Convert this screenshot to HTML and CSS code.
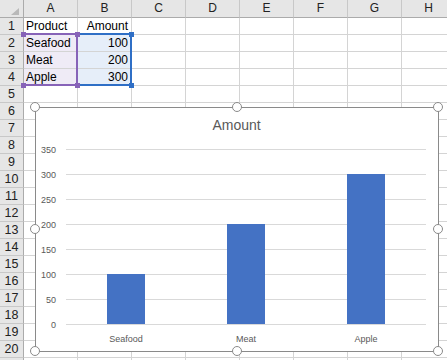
FILE: index.html
```html
<!DOCTYPE html>
<html>
<head>
<meta charset="utf-8">
<link rel="stylesheet" href="styles.css">
</head>
<body>
<div class="app">
  <div class="sheet">
    <div class="corner"><span class="tri"></span></div>
    <div class="ch">A</div><div class="ch">B</div><div class="ch">C</div><div class="ch">D</div><div class="ch">E</div><div class="ch">F</div><div class="ch">G</div><div class="ch">H</div>

    <div class="rh">1</div><div class="c">Product</div><div class="c r">Amount</div><div class="c"></div><div class="c"></div><div class="c"></div><div class="c"></div><div class="c"></div><div class="c"></div>
    <div class="rh">2</div><div class="c pf">Seafood</div><div class="c r bf">100</div><div class="c"></div><div class="c"></div><div class="c"></div><div class="c"></div><div class="c"></div><div class="c"></div>
    <div class="rh">3</div><div class="c pf">Meat</div><div class="c r bf">200</div><div class="c"></div><div class="c"></div><div class="c"></div><div class="c"></div><div class="c"></div><div class="c"></div>
    <div class="rh">4</div><div class="c pf">Apple</div><div class="c r bf">300</div><div class="c"></div><div class="c"></div><div class="c"></div><div class="c"></div><div class="c"></div><div class="c"></div>
    <div class="rh">5</div><div class="c"></div><div class="c"></div><div class="c"></div><div class="c"></div><div class="c"></div><div class="c"></div><div class="c"></div><div class="c"></div>
    <div class="rh">6</div><div class="c"></div><div class="c"></div><div class="c"></div><div class="c"></div><div class="c"></div><div class="c"></div><div class="c"></div><div class="c"></div>
    <div class="rh">7</div><div class="c"></div><div class="c"></div><div class="c"></div><div class="c"></div><div class="c"></div><div class="c"></div><div class="c"></div><div class="c"></div>
    <div class="rh">8</div><div class="c"></div><div class="c"></div><div class="c"></div><div class="c"></div><div class="c"></div><div class="c"></div><div class="c"></div><div class="c"></div>
    <div class="rh">9</div><div class="c"></div><div class="c"></div><div class="c"></div><div class="c"></div><div class="c"></div><div class="c"></div><div class="c"></div><div class="c"></div>
    <div class="rh">10</div><div class="c"></div><div class="c"></div><div class="c"></div><div class="c"></div><div class="c"></div><div class="c"></div><div class="c"></div><div class="c"></div>
    <div class="rh">11</div><div class="c"></div><div class="c"></div><div class="c"></div><div class="c"></div><div class="c"></div><div class="c"></div><div class="c"></div><div class="c"></div>
    <div class="rh">12</div><div class="c"></div><div class="c"></div><div class="c"></div><div class="c"></div><div class="c"></div><div class="c"></div><div class="c"></div><div class="c"></div>
    <div class="rh">13</div><div class="c"></div><div class="c"></div><div class="c"></div><div class="c"></div><div class="c"></div><div class="c"></div><div class="c"></div><div class="c"></div>
    <div class="rh">14</div><div class="c"></div><div class="c"></div><div class="c"></div><div class="c"></div><div class="c"></div><div class="c"></div><div class="c"></div><div class="c"></div>
    <div class="rh">15</div><div class="c"></div><div class="c"></div><div class="c"></div><div class="c"></div><div class="c"></div><div class="c"></div><div class="c"></div><div class="c"></div>
    <div class="rh">16</div><div class="c"></div><div class="c"></div><div class="c"></div><div class="c"></div><div class="c"></div><div class="c"></div><div class="c"></div><div class="c"></div>
    <div class="rh">17</div><div class="c"></div><div class="c"></div><div class="c"></div><div class="c"></div><div class="c"></div><div class="c"></div><div class="c"></div><div class="c"></div>
    <div class="rh">18</div><div class="c"></div><div class="c"></div><div class="c"></div><div class="c"></div><div class="c"></div><div class="c"></div><div class="c"></div><div class="c"></div>
    <div class="rh">19</div><div class="c"></div><div class="c"></div><div class="c"></div><div class="c"></div><div class="c"></div><div class="c"></div><div class="c"></div><div class="c"></div>
    <div class="rh">20</div><div class="c"></div><div class="c"></div><div class="c"></div><div class="c"></div><div class="c"></div><div class="c"></div><div class="c"></div><div class="c"></div>
    <div class="rh"></div><div class="c"></div><div class="c"></div><div class="c"></div><div class="c"></div><div class="c"></div><div class="c"></div><div class="c"></div><div class="c"></div>
  </div>

  <div class="sel sel-blue"></div>
  <div class="sel sel-purple"></div>
  <span class="hd hd-b hd-b1"></span>
  <span class="hd hd-b hd-b2"></span>
  <span class="hd hd-p hd-p1"></span>
  <span class="hd hd-p hd-p2"></span>
  <span class="hd hd-p hd-p3"></span>
  <span class="hd hd-p hd-p4"></span>

  <div class="chart">
    <svg class="plot" width="402" height="243" viewBox="0 0 402 243">
      <text class="title" x="200.5" y="22">Amount</text>
      <g class="grid">
        <line x1="30" x2="390" y1="41.5" y2="41.5"/>
        <line x1="30" x2="390" y1="66.5" y2="66.5"/>
        <line x1="30" x2="390" y1="91.5" y2="91.5"/>
        <line x1="30" x2="390" y1="116.5" y2="116.5"/>
        <line x1="30" x2="390" y1="141.5" y2="141.5"/>
        <line x1="30" x2="390" y1="166.5" y2="166.5"/>
        <line x1="30" x2="390" y1="191.5" y2="191.5"/>
        <line x1="30" x2="390" y1="216.5" y2="216.5"/>
      </g>
      <g class="ylab">
        <text x="20" y="44.5">350</text>
        <text x="20" y="69.5">300</text>
        <text x="20" y="94.5">250</text>
        <text x="20" y="119.5">200</text>
        <text x="20" y="144.5">150</text>
        <text x="20" y="169.5">100</text>
        <text x="20" y="194.5">50</text>
        <text x="20" y="219.5">0</text>
      </g>
      <g class="bars">
        <rect x="71" y="166" width="38" height="50"/>
        <rect x="191" y="116" width="38" height="100"/>
        <rect x="311" y="66" width="38" height="150"/>
      </g>
      <g class="xlab">
        <text x="90" y="234">Seafood</text>
        <text x="210" y="234">Meat</text>
        <text x="330" y="234">Apple</text>
      </g>
    </svg>
    <span class="h h-tl"></span>
    <span class="h h-tm"></span>
    <span class="h h-tr"></span>
    <span class="h h-ml"></span>
    <span class="h h-mr"></span>
    <span class="h h-bl"></span>
    <span class="h h-bm"></span>
    <span class="h h-br"></span>
  </div>
</div>
</body>
</html>
```

FILE: styles.css
```css
html, body {
  margin: 0;
  padding: 0;
  background: #ffffff;
}
.app {
  position: relative;
  width: 447px;
  height: 360px;
  overflow: hidden;
  font-family: "Liberation Sans", Arial, sans-serif;
}
.sheet {
  display: grid;
  grid-template-columns: 24px repeat(8, 54px);
  grid-template-rows: 18px;
  grid-auto-rows: 17px;
}
.sheet > div {
  box-sizing: border-box;
}
.corner {
  position: relative;
  background: #e6e6e6;
  border-right: 1px solid #ababab;
  border-bottom: 1px solid #ababab;
}
.tri {
  position: absolute;
  right: 4px;
  bottom: 2px;
  width: 0;
  height: 0;
  border-left: 8px solid transparent;
  border-bottom: 7px solid #b9b9b9;
}
.ch {
  background: #e6e6e6;
  border-right: 1px solid #c8c8c8;
  border-bottom: 1px solid #ababab;
  font-size: 12px;
  color: #222;
  text-align: center;
  line-height: 17px;
}
.rh {
  background: #e6e6e6;
  border-right: 1px solid #ababab;
  border-bottom: 1px solid #c8c8c8;
  font-size: 12.5px;
  color: #222;
  text-align: center;
  line-height: 17px;
}
.c {
  border-right: 1px solid #d4d4d4;
  border-bottom: 1px solid #d4d4d4;
  font-size: 12px;
  color: #000;
  line-height: 17px;
  padding: 0 2px;
  white-space: nowrap;
  overflow: hidden;
}
.c.r {
  text-align: right;
  padding-right: 3px;
}
.c.pf {
  background: #efebf6;
}
.c.bf {
  background: #e6eef9;
}

.sel {
  position: absolute;
  box-sizing: border-box;
}
.sel-purple {
  left: 24px;
  top: 33px;
  width: 54px;
  height: 53px;
  border-top: 2px solid #8763b8;
  border-right: 2px solid #8763b8;
  border-bottom: 2px solid #8763b8;
}
.sel-blue {
  left: 76px;
  top: 33px;
  width: 56px;
  height: 53px;
  border: 2px solid #2f6fc6;
}
.hd {
  position: absolute;
  width: 5px;
  height: 5px;
  box-sizing: border-box;
}
.hd-p {
  background: #8763b8;
}
.hd-b {
  background: #2f6fc6;
}
.hd-p1 { left: 21px; top: 32px; }
.hd-p2 { left: 21px; top: 83px; }
.hd-p3 { left: 75px; top: 32px; }
.hd-p4 { left: 75px; top: 83px; }
.hd-b1 { left: 129px; top: 32px; }
.hd-b2 { left: 129px; top: 83px; }

.chart {
  position: absolute;
  left: 35px;
  top: 107px;
  width: 404px;
  height: 245px;
  box-sizing: border-box;
  border: 1px solid #8a8a8a;
  background: #ffffff;
}
.plot {
  display: block;
  font-family: "Liberation Sans", Arial, sans-serif;
}
.title {
  font-size: 14px;
  fill: #595959;
  text-anchor: middle;
}
.grid line {
  stroke: #d9d9d9;
  stroke-width: 1;
  shape-rendering: crispEdges;
}
.ylab text {
  font-size: 9px;
  fill: #595959;
  text-anchor: end;
}
.bars rect {
  fill: #4472c4;
  shape-rendering: crispEdges;
}
.xlab text {
  font-size: 9px;
  fill: #595959;
  text-anchor: middle;
}
.h {
  position: absolute;
  width: 10px;
  height: 10px;
  box-sizing: border-box;
  border: 1.5px solid #8a8a8a;
  border-radius: 50%;
  background: #ffffff;
}
.h-tl { left: -6px; top: -6px; }
.h-tm { left: 195.5px; top: -6px; }
.h-tr { left: 397px; top: -6px; }
.h-ml { left: -6px; top: 116px; }
.h-mr { left: 397px; top: 116px; }
.h-bl { left: -6px; top: 238px; }
.h-bm { left: 195.5px; top: 238px; }
.h-br { left: 397px; top: 238px; }
```
